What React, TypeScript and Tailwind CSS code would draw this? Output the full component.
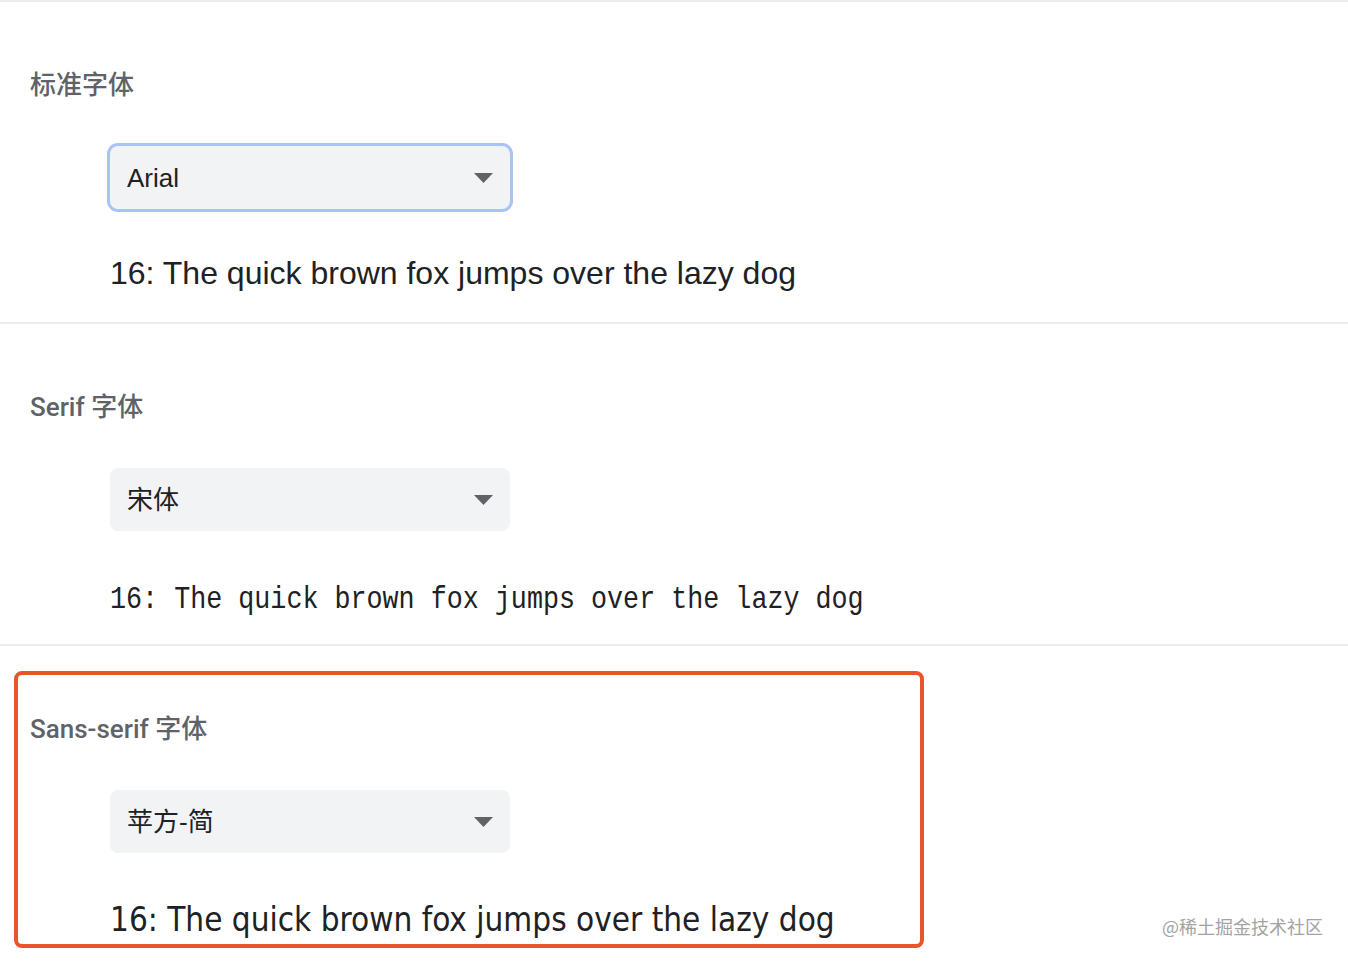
import React from "react";

const labelFont = { fontFamily: '"Roboto", "Noto Sans CJK SC", sans-serif' };

function Arrow() {
  return (
    <svg width="19" height="10" viewBox="0 0 19 10" className="shrink-0">
      <path d="M0 0 L19 0 L9.5 10 Z" fill="#5f6368" />
    </svg>
  );
}

function Select({ value, focused }: { value: string; focused?: boolean }) {
  return (
    <div
      className={
        "ml-[80px] mt-[45px] flex h-[63px] w-[400px] items-center justify-between rounded-[8px] bg-[#f1f3f4] pl-[17px] pr-[17px] " +
        (focused ? "ring-[3px] ring-[#a8c4f4]" : "")
      }
    >
      <span
        className="text-[26px] leading-none text-[#202124]"
        style={{ fontFamily: '"Liberation Sans", "Noto Sans CJK SC", sans-serif' }}
      >
        {value}
      </span>
      <Arrow />
    </div>
  );
}

function Section({
  label,
  value,
  focused,
  sample,
  sampleClass,
}: {
  label: string;
  value: string;
  focused?: boolean;
  sample: React.ReactNode;
  sampleClass: string;
}) {
  return (
    <section className="flex h-[322px] flex-col border-b-2 border-[#ececec] pl-[30px]">
      <div
        className="mt-[67px] h-[32px] text-[26px] font-medium leading-[32px] text-[#5f6368]"
        style={labelFont}
      >
        {label}
      </div>
      <Select value={value} focused={focused} />
      <div className={"ml-[80px] h-[40px] whitespace-nowrap leading-[40px] text-[#202124] " + sampleClass}>
        {sample}
      </div>
    </section>
  );
}

export default function App() {
  const text = "16: The quick brown fox jumps over the lazy dog";
  return (
    <div className="relative h-[962px] w-[1348px] overflow-hidden bg-white">
      <div className="h-[2px] bg-[#ececec]" />
      <Section
        label="标准字体"
        value="Arial"
        focused
        sampleClass="mt-[44px]"
        sample={
          <span className="text-[32px]" style={{ fontFamily: '"Liberation Sans", Arial, sans-serif' }}>
            {text}
          </span>
        }
      />
      <Section
        label="Serif 字体"
        value="宋体"
        sampleClass="mt-[49px]"
        sample={
          <span
            className="inline-block origin-left scale-x-[0.835] text-[32px]"
            style={{ fontFamily: '"Liberation Mono", monospace' }}
          >
            {text}
          </span>
        }
      />
      <Section
        label="Sans-serif 字体"
        value="苹方-简"
        sampleClass="mt-[47px]"
        sample={
          <span
            className="text-[33px]"
            style={{ fontFamily: '"DejaVu Sans Condensed", "DejaVu Sans", sans-serif', fontStretch: "condensed" }}
          >
            {text}
          </span>
        }
      />
      <div className="pointer-events-none absolute left-[14px] top-[671px] h-[277px] w-[910px] rounded-[8px] border-4 border-[#e9542c]" />
      <div
        className="absolute left-[1162px] top-[914px] text-[18px] leading-[24px] text-[#a3a3a3]"
        style={{ fontFamily: '"Noto Sans CJK SC", sans-serif' }}
      >
        @稀土掘金技术社区
      </div>
    </div>
  );
}
